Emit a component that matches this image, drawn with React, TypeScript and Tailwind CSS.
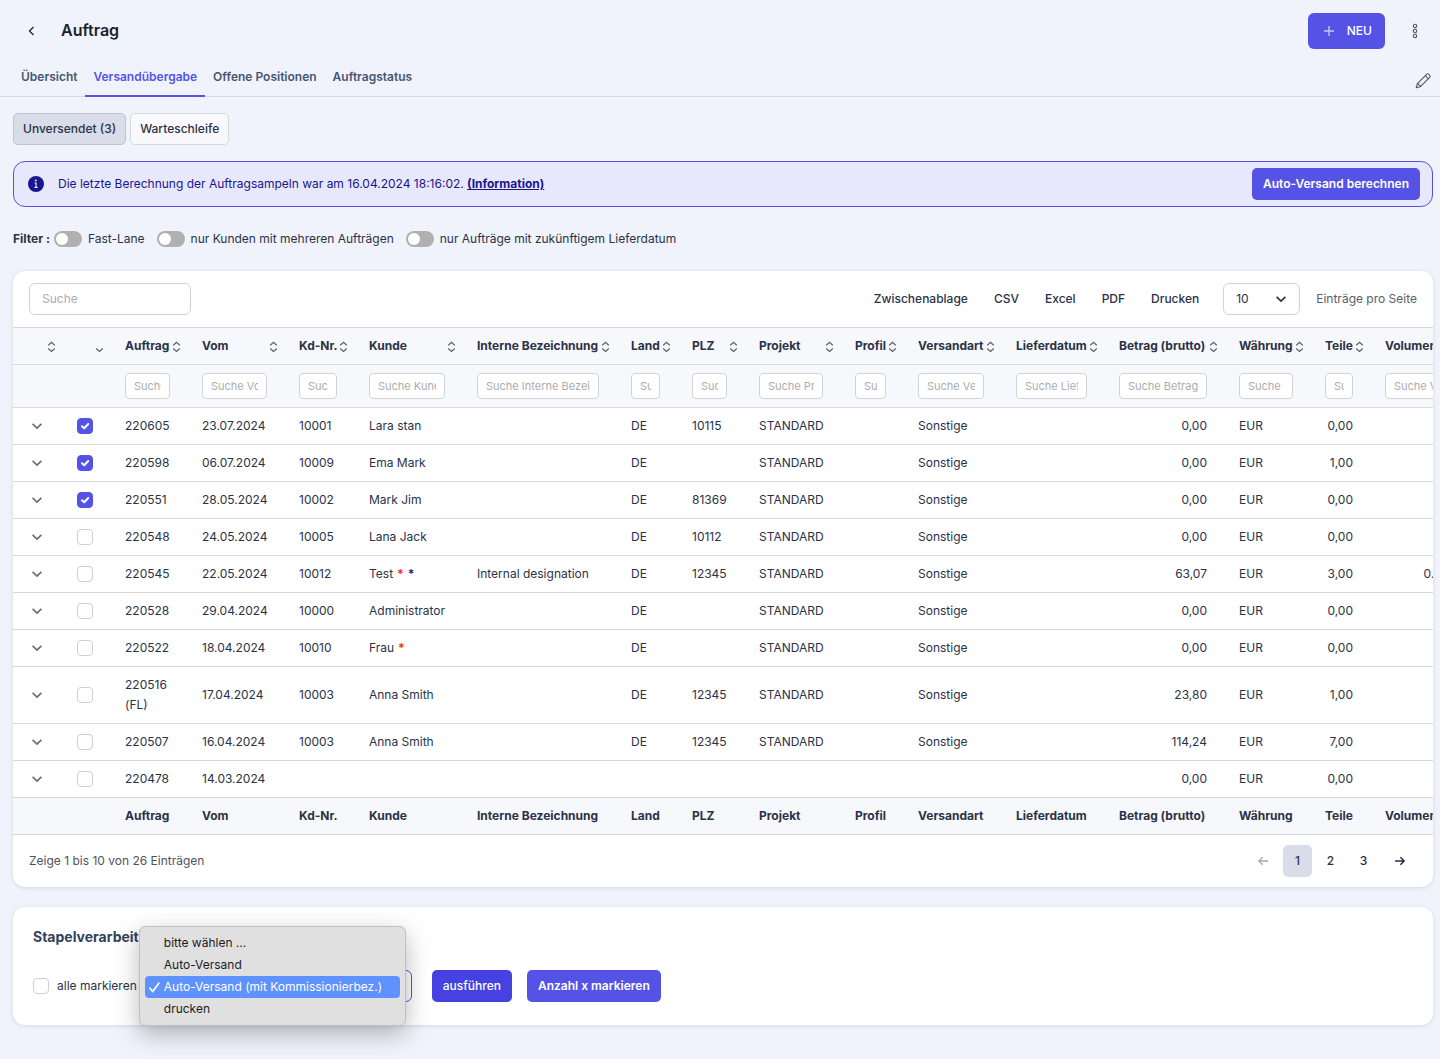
import React, { useState } from 'react';

type Column = {
  label: string;
  width: string;
  align?: 'right';
};

type Order = {
  id: string;
  checked?: boolean;
  marks?: string[];
  cells: string[];
};

const columns: Column[] = [
  { label: 'Auftrag', width: 'w-[77px]' },
  { label: 'Vom', width: 'w-[97px]' },
  { label: 'Kd-Nr.', width: 'w-[70px]' },
  { label: 'Kunde', width: 'w-[108px]' },
  { label: 'Interne Bezeichnung', width: 'w-[154px]' },
  { label: 'Land', width: 'w-[61px]' },
  { label: 'PLZ', width: 'w-[67px]' },
  { label: 'Projekt', width: 'w-[96px]' },
  { label: 'Profil', width: 'w-[63px]' },
  { label: 'Versandart', width: 'w-[98px]' },
  { label: 'Lieferdatum', width: 'w-[103px]' },
  { label: 'Betrag (brutto)', width: 'w-[120px]', align: 'right' },
  { label: 'Währung', width: 'w-[86px]' },
  { label: 'Teile', width: 'w-[60px]', align: 'right' },
  { label: 'Volumen', width: 'w-[96px]', align: 'right' }
];

const orders: Order[] = [
  { id: '220605', checked: true, cells: ['220605', '23.07.2024', '10001', 'Lara stan', '', 'DE', '10115', 'STANDARD', '', 'Sonstige', '', '0,00', 'EUR', '0,00', ''] },
  { id: '220598', checked: true, cells: ['220598', '06.07.2024', '10009', 'Ema Mark', '', 'DE', '', 'STANDARD', '', 'Sonstige', '', '0,00', 'EUR', '1,00', ''] },
  { id: '220551', checked: true, cells: ['220551', '28.05.2024', '10002', 'Mark Jim', '', 'DE', '81369', 'STANDARD', '', 'Sonstige', '', '0,00', 'EUR', '0,00', ''] },
  { id: '220548', cells: ['220548', '24.05.2024', '10005', 'Lana Jack', '', 'DE', '10112', 'STANDARD', '', 'Sonstige', '', '0,00', 'EUR', '0,00', ''] },
  { id: '220545', marks: ['text-[#ff2a12]', 'text-[#1c1a9c]'], cells: ['220545', '22.05.2024', '10012', 'Test', 'Internal designation', 'DE', '12345', 'STANDARD', '', 'Sonstige', '', '63,07', 'EUR', '3,00', '0.00'] },
  { id: '220528', cells: ['220528', '29.04.2024', '10000', 'Administrator', '', 'DE', '', 'STANDARD', '', 'Sonstige', '', '0,00', 'EUR', '0,00', ''] },
  { id: '220522', marks: ['text-[#ff2a12]'], cells: ['220522', '18.04.2024', '10010', 'Frau', '', 'DE', '', 'STANDARD', '', 'Sonstige', '', '0,00', 'EUR', '0,00', ''] },
  { id: '220516', cells: ['220516 (FL)', '17.04.2024', '10003', 'Anna Smith', '', 'DE', '12345', 'STANDARD', '', 'Sonstige', '', '23,80', 'EUR', '1,00', ''] },
  { id: '220507', cells: ['220507', '16.04.2024', '10003', 'Anna Smith', '', 'DE', '12345', 'STANDARD', '', 'Sonstige', '', '114,24', 'EUR', '7,00', ''] },
  { id: '220478', cells: ['220478', '14.03.2024', '', '', '', '', '', '', '', '', '', '0,00', 'EUR', '0,00', ''] }
];

const tabs = ['Übersicht', 'Versandübergabe', 'Offene Positionen', 'Auftragstatus'];
const filters = ['Fast-Lane', 'nur Kunden mit mehreren Aufträgen', 'nur Aufträge mit zukünftigem Lieferdatum'];
const exportsList = ['Zwischenablage', 'CSV', 'Excel', 'PDF', 'Drucken'];
const batchOptions = ['bitte wählen ...', 'Auto-Versand', 'Auto-Versand (mit Kommissionierbez.)', 'drucken'];

const SortIcon = ({ downOnly = false }: { downOnly?: boolean }) => {
  return <svg width="9" height="12" viewBox="0 0 9 12" fill="none" stroke="#5c5f66" strokeWidth="1.2" className="shrink-0">
      {!downOnly && <path d="M1.2 4.3 4.5 1.3 7.8 4.3" />}
      <path d="M1.2 7.5 4.5 10.5 7.8 7.5" />
    </svg>;
};

const Chevron = ({ className }: { className?: string }) => {
  return <svg width="12" height="12" viewBox="0 0 12 12" fill="none" stroke="currentColor" strokeWidth="1.7" className={className}>
      <path d="M1.6 3.8 6 8 10.4 3.8" />
    </svg>;
};

const Checkbox = ({ id, label, checked, className = '' }: { id: string; label?: string; checked?: boolean; className?: string }) => {
  return <span className={`relative flex size-4 ${className}`}>
      <input id={id} aria-label={label} type="checkbox" defaultChecked={checked} className="peer size-4 appearance-none rounded border border-[#cfcfd2] bg-white checked:border-[#5553e6] checked:bg-[#5553e6]" />
      <svg width="16" height="16" viewBox="0 0 16 16" fill="none" stroke="white" strokeWidth="2" strokeLinecap="round" strokeLinejoin="round" className="pointer-events-none absolute inset-0 hidden peer-checked:block">
        <path d="M5 8.2 7.2 10.2 11.2 6" />
      </svg>
    </span>;
};

const PageHeader = () => {
  return <header>
      <div className="flex h-[61px] items-center pl-[23px] pr-5">
        <button aria-label="Zurück" className="flex w-4 justify-center text-[#1b2130]">
          <svg width="7" height="10" viewBox="0 0 7 10" fill="none" stroke="currentColor" strokeWidth="1.3">
            <path d="M5.5 1 1.5 5l4 4" />
          </svg>
        </button>
        <h1 className="ml-[22px] pb-[2px] text-base leading-6 font-semibold text-[#1b2130]">Auftrag</h1>
        <button className="ml-auto flex h-9 items-center rounded-md bg-[#5553e6] pl-4 pr-[13px] font-medium text-white">
          <svg width="10" height="10" viewBox="0 0 10 10" stroke="#c5c5f8" strokeWidth="1.4" className="mr-[13px]">
            <path d="M5 0v10M0 5h10" />
          </svg>
          NEU
        </button>
        <button aria-label="Mehr" className="ml-[25px] flex w-[10px] justify-center">
          <svg width="6" height="16" viewBox="0 0 6 16" fill="none" stroke="#4b5263" strokeWidth="1.1">
            <circle cx="3" cy="3" r="1.7" />
            <circle cx="3" cy="8" r="1.7" />
            <circle cx="3" cy="13" r="1.7" />
          </svg>
        </button>
      </div>
      <nav className="flex h-9 items-stretch border-b border-[#d3dae8] pl-[13px] pr-2">
        {tabs.map((tab, index) => <a key={tab} href="#" className={index === 1 ? '-mb-px border-b-2 border-[#5553e6] px-2 pt-[6px] font-semibold text-[#5553e6]' : 'px-2 pt-[6px] font-semibold text-[#475673]'}>
            {tab}
          </a>)}
        <button aria-label="Bearbeiten" className="ml-auto mt-1">
          <svg width="18" height="18" viewBox="0 0 18 18" fill="none" stroke="#4b5570" strokeWidth="1.1" strokeLinejoin="round">
            <path d="M2.2 15.8 3.3 11.6 12.6 2.3a1.5 1.5 0 0 1 2.1 0l1 1a1.5 1.5 0 0 1 0 2.1L6.4 14.7zM11.2 3.7l3.1 3.1M3.3 11.6l1.2.4.4 1.1 1.1.4.4 1.2" />
          </svg>
        </button>
      </nav>
    </header>;
};

const InfoBanner = () => {
  return <div className="mt-4 flex h-[46px] items-center rounded-xl border border-[#5553e6] bg-[#e8e8fd] pl-[14px] pr-3 text-[#1a148f]">
      <svg width="16" height="16" viewBox="0 0 16 16" className="mr-[14px]">
        <circle cx="8" cy="8" r="8" fill="#1a148f" />
        <circle cx="7.8" cy="4.6" r="1" fill="#e8e8fd" />
        <path d="M6.5 7h1.6v4.2M6.4 11.4h3.3" stroke="#e8e8fd" strokeWidth="1.1" fill="none" />
      </svg>
      <p>
        Die letzte Berechnung der Auftragsampeln war am 16.04.2024 18:16:02.{' '}
        <a href="#" className="font-bold underline">(Information)</a>
      </p>
      <button className="ml-auto h-8 rounded-[5px] bg-[#5553e6] px-[11px] font-semibold text-white">Auto-Versand berechnen</button>
    </div>;
};

const FilterBar = () => {
  return <div className="mt-[22px] flex h-5 items-center">
      <span className="font-bold">Filter :</span>
      {filters.map((filter, index) => <label key={filter} className={index === 0 ? 'ml-1 flex items-center' : 'ml-3 flex items-center'}>
          <span className="relative mr-[6px] flex h-4 w-7">
            <input type="checkbox" className="peer h-4 w-7 appearance-none rounded-full bg-[#b0b0b0] checked:bg-[#5553e6]" />
            <span className="pointer-events-none absolute left-[2px] top-[2px] size-3 rounded-full bg-white peer-checked:left-[14px]"></span>
          </span>
          {filter}
        </label>)}
    </div>;
};

const OrderTable = () => {
  return <div className="overflow-x-auto [scrollbar-width:none]">
      <table className="w-[1452px] min-w-full table-fixed border-separate border-spacing-0 text-left">
        <colgroup>
          <col className="w-12" />
          <col className="w-12" />
          {columns.map(column => <col key={column.label} className={column.width} />)}
        </colgroup>
        <thead className="bg-[#f7f8fc]">
          <tr className="h-[38px]">
            <th aria-label="Details" className="border-y border-[#d6d8dc] pr-[5px]">
              <div className="flex justify-end pt-[2px]"><SortIcon /></div>
            </th>
            <th aria-label="Auswahl" className="border-y border-[#d6d8dc] pr-[5px]">
              <div className="flex justify-end pt-[2px]"><SortIcon downOnly /></div>
            </th>
            {columns.map(column => <th key={column.label} className="border-y border-[#d6d8dc] pl-4 pr-[5px] font-bold whitespace-nowrap">
                <div className="flex items-center justify-between">
                  {column.label}
                  <span className="pt-[2px]"><SortIcon /></span>
                </div>
              </th>)}
          </tr>
          <tr className="h-[43px]">
            <td className="border-b border-[#d6d8dc]"></td>
            <td className="border-b border-[#d6d8dc]"></td>
            {columns.map(column => <td key={column.label} className="border-b border-[#d6d8dc] px-4">
                <input type="text" aria-label={`Suche ${column.label}`} placeholder={`Suche ${column.label}`} className="block h-[26px] w-full rounded border border-[#d2d3d6] bg-white px-2 text-[11px] placeholder:text-[#acacb0]" />
              </td>)}
          </tr>
        </thead>
        <tbody>
          {orders.map(order => <tr key={order.id} className="h-[37px]">
              <td className="border-b border-[#d6d8dc]">
                <button aria-label={`Details ${order.id}`} className="mx-auto block text-[#6b6d73]"><Chevron /></button>
              </td>
              <td className="border-b border-[#d6d8dc]">
                <Checkbox id={`order-${order.id}`} label={`Auftrag ${order.id}`} checked={order.checked} className="mx-auto" />
              </td>
              {order.cells.map((cell, index) => <td key={columns[index].label} className={columns[index].align === 'right' ? 'border-b border-[#d6d8dc] px-4 py-2 text-right' : 'border-b border-[#d6d8dc] px-4 py-2'}>
                  {cell}
                  {index === 3 && order.marks?.map(mark => <b key={mark} className={`ml-1 ${mark}`}>*</b>)}
                </td>)}
            </tr>)}
        </tbody>
        <tfoot className="bg-[#f7f8fc]">
          <tr className="h-[37px]">
            <td className="border-b border-[#d6d8dc]"></td>
            <td className="border-b border-[#d6d8dc]"></td>
            {columns.map(column => <th key={column.label} className="border-b border-[#d6d8dc] px-4 font-bold whitespace-nowrap">{column.label}</th>)}
          </tr>
        </tfoot>
      </table>
    </div>;
};

const OrderCard = () => {
  return <section className="mt-[22px] overflow-hidden rounded-xl bg-white shadow-[0_1px_4px_rgba(40,50,90,0.13)]">
      <div className="flex h-14 items-center px-4">
        <input type="text" aria-label="Suche" placeholder="Suche" className="h-8 w-[162px] rounded-md border border-[#d2d3d6] px-3 pb-[2px] placeholder:text-[#acacb0]" />
        <div className="ml-auto flex items-center gap-[26px] font-medium">
          {exportsList.map(name => <button key={name}>{name}</button>)}
        </div>
        <div className="relative ml-6">
          <select id="page-size" defaultValue="10" className="h-8 w-[77px] appearance-none rounded-md border border-[#d2d3d6] bg-white pl-3">
            <option>10</option>
            <option>25</option>
            <option>50</option>
          </select>
          <Chevron className="pointer-events-none absolute right-[13px] top-[10px]" />
        </div>
        <label htmlFor="page-size" className="ml-4 text-[#5b5e66]">Einträge pro Seite</label>
      </div>
      <OrderTable />
      <div className="flex h-[52px] items-center justify-between px-4">
        <p className="text-[#4f525a]">Zeige 1 bis 10 von 26 Einträgen</p>
        <nav className="flex items-center gap-1 font-medium">
          <button aria-label="Zurück" className="flex h-8 w-8 items-center justify-center text-[#a9a9ad]">
            <svg width="10" height="10" viewBox="0 0 10 10" fill="none" stroke="currentColor" strokeWidth="1.3">
              <path d="M10 5H1M4.6 1.2.9 5l3.7 3.8" />
            </svg>
          </button>
          <button className="h-8 w-[29px] rounded-[5px] bg-[#d8dde9]">1</button>
          <button className="h-8 w-[29px]">2</button>
          <button className="h-8 w-[29px]">3</button>
          <button aria-label="Weiter" className="flex h-8 w-[35px] items-center justify-center">
            <svg width="10" height="10" viewBox="0 0 10 10" fill="none" stroke="currentColor" strokeWidth="1.5">
              <path d="M0 5h9M5.4 1.2 9.1 5 5.4 8.8" />
            </svg>
          </button>
        </nav>
      </div>
    </section>;
};

const BatchCard = () => {
  const [selected, setSelected] = useState(batchOptions[2]);
  return <section className="mt-5 rounded-xl bg-white px-5 pt-5 pb-[23px] shadow-[0_1px_4px_rgba(40,50,90,0.13)]">
      <h2 className="text-sm leading-5 font-bold text-[#33415c]">Stapelverarbeitung</h2>
      <div className="mt-[23px] flex items-center">
        <Checkbox id="mark-all" />
        <label htmlFor="mark-all" className="ml-2">alle markieren</label>
        <div className="relative ml-[3px]">
          <select aria-label="Stapelverarbeitung" value={selected} onChange={event => setSelected(event.target.value)} className="block h-8 w-[272px] appearance-none rounded-md border border-[#5553e6] bg-white pl-6">
            {batchOptions.map(option => <option key={option}>{option}</option>)}
          </select>
          <ul role="listbox" className="absolute -left-px -top-11 w-[267px] rounded-md border border-[#bfbfc0] bg-[#e0e0e0] px-[5px] py-[5px] leading-[22px] text-[#1c1c1e] shadow-[0_8px_24px_rgba(0,0,0,0.28)]">
            {batchOptions.map(option => <li key={option} role="option" aria-selected={option === selected} onClick={() => setSelected(option)} className={option === selected ? 'flex h-[22px] items-center rounded bg-[#5f92fe] pl-1 whitespace-nowrap text-white' : 'h-[22px] pl-[19px] whitespace-nowrap'}>
                {option === selected && <svg width="11" height="11" viewBox="0 0 11 11" fill="none" stroke="currentColor" strokeWidth="1.7" strokeLinecap="round" strokeLinejoin="round" className="mr-1">
                    <path d="M1 6.2 3.8 9.6 9.8 1.2" />
                  </svg>}
                {option}
              </li>)}
          </ul>
        </div>
        <button className="ml-5 h-8 rounded-[5px] bg-[#4642e2] px-[11px] font-medium text-white">ausführen</button>
        <button className="ml-[15px] h-8 rounded-[5px] bg-[#5553e6] px-[11px] font-semibold text-white">Anzahl x markieren</button>
      </div>
    </section>;
};

export default function App() {
  return <div className="min-h-screen bg-[#f0f3fb] pb-8 font-['Inter',sans-serif] text-[12px] leading-5 text-[#2a3247]">
      <PageHeader />
      <main className="pl-[13px] pr-[7px] pt-4">
        <div className="flex gap-1 font-medium">
          <button className="h-8 rounded-[5px] border border-[#bcc3d1] bg-[#d8dde9] px-[9px]">Unversendet (3)</button>
          <button className="h-8 rounded-[5px] border border-[#d6d8dc] bg-[#f9f9fd] px-[9px]">Warteschleife</button>
        </div>
        <InfoBanner />
        <FilterBar />
        <OrderCard />
        <BatchCard />
      </main>
    </div>;
}
